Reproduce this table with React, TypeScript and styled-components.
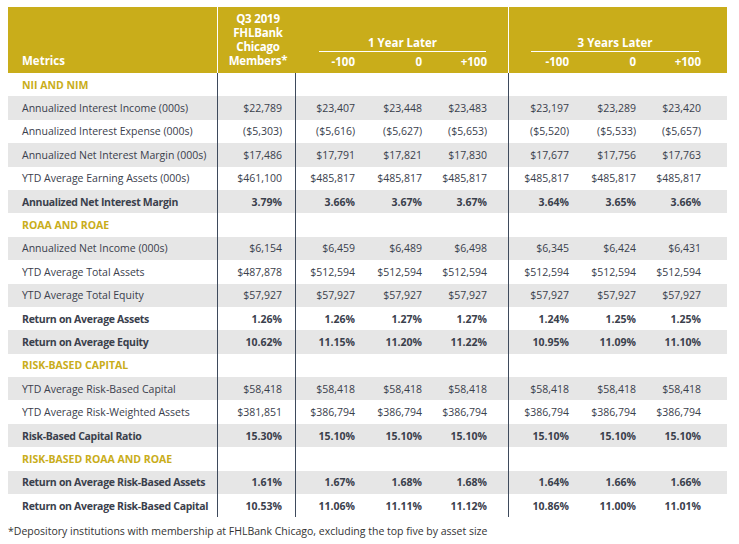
import React from "react";
import styled, { createGlobalStyle, css } from "styled-components";

const GOLD = "#c9ad1a";
const TEXT = "#3a404c";
const LINE = "#3e4a5c";
const STRIPE = "#e6e6e6";
const COLS = "210px 78px 59px 67px 65px 22px 60px 67px 65px 26px";

const Global = createGlobalStyle`
  html, body { margin: 0; padding: 0; background: #fff; }
  body { font-family: "Open Sans", "Noto Sans", sans-serif; }
`;

const Page = styled.div`
  padding: 7px 8px 0 8px;
  width: 719px;
`;

const Header = styled.div`
  display: grid;
  grid-template-columns: ${COLS};
  grid-template-rows: 45px 21px;
  background: ${GOLD};
  color: #fff;
  font-weight: 700;
  font-size: 11px;
`;

const HeadMetrics = styled.div`
  grid-column: 1;
  grid-row: 1 / 3;
  display: flex;
  align-items: flex-end;
  padding: 0 0 5px 14px;
  border-right: 1px solid #fff;
  font-size: 11.5px;
`;

const HeadQ3 = styled.div`
  grid-column: 2;
  grid-row: 1 / 3;
  display: flex;
  align-items: flex-end;
  justify-content: center;
  text-align: center;
  line-height: 14px;
  padding: 0 0 5px 2px;
  font-size: 11.5px;
  letter-spacing: -0.2px;
`;

const GroupCell = styled.div<{ $col: string; $divider?: boolean }>`
  grid-column: ${(p) => p.$col};
  grid-row: 1;
  display: flex;
  align-items: flex-end;
  ${(p) =>
    p.$divider &&
    css`
      border-right: 1px solid #fff;
    `}
`;

const GroupLabel = styled.div<{ $ml: number; $mr: number }>`
  flex: 1;
  margin: 0 ${(p) => p.$mr}px 0 ${(p) => p.$ml}px;
  border-bottom: 1px solid #fff;
  text-align: center;
  font-size: 11.5px;
  line-height: 14px;
  padding-bottom: 1px;
`;

const SpacerHead = styled.div<{ $col: number; $divider?: boolean }>`
  grid-column: ${(p) => p.$col};
  grid-row: 2;
  ${(p) =>
    p.$divider &&
    css`
      border-right: 1px solid #fff;
    `}
`;

const SubLabel = styled.div<{ $col: number }>`
  grid-column: ${(p) => p.$col};
  grid-row: 2;
  text-align: right;
  font-size: 11.5px;
  line-height: 19px;
`;

const Row = styled.div<{ $shade: boolean }>`
  display: grid;
  grid-template-columns: ${COLS};
  height: 23.4px;
  background: ${(p) => (p.$shade ? STRIPE : "#fff")};
  color: ${TEXT};
  font-size: 10.5px;
`;

const Label = styled.div<{ $bold?: boolean; $section?: boolean }>`
  display: flex;
  align-items: center;
  padding-left: 14px;
  border-right: 1px solid ${LINE};
  white-space: nowrap;
  overflow: hidden;
  font-weight: ${(p) => (p.$bold || p.$section ? 700 : 400)};
  letter-spacing: ${(p) => (p.$bold ? "-0.3px" : "0")};
  color: ${(p) => (p.$section ? GOLD : TEXT)};
`;

const Value = styled.div<{ $bold?: boolean; $pad?: number; $divider?: boolean }>`
  display: flex;
  align-items: center;
  justify-content: flex-end;
  padding-right: ${(p) => p.$pad ?? 0}px;
  white-space: nowrap;
  font-weight: ${(p) => (p.$bold ? 700 : 400)};
  ${(p) =>
    p.$divider &&
    css`
      border-right: 1px solid ${LINE};
    `}
`;

const Gap = styled.div<{ $divider?: boolean }>`
  ${(p) =>
    p.$divider &&
    css`
      border-right: 1px solid ${LINE};
    `}
`;

const Footnote = styled.div`
  margin-top: 7px;
  font-size: 10.5px;
  line-height: 14px;
  color: #333;
`;

type DataRow =
  | { section: string }
  | { label: string; bold?: boolean; values: string[] };

const rep = (v: string, n: number) => Array(n).fill(v);

const rows: DataRow[] = [
  { section: "NII AND NIM" },
  {
    label: "Annualized Interest Income (000s)",
    values: ["$22,789", "$23,407", "$23,448", "$23,483", "$23,197", "$23,289", "$23,420"],
  },
  {
    label: "Annualized Interest Expense (000s)",
    values: ["($5,303)", "($5,616)", "($5,627)", "($5,653)", "($5,520)", "($5,533)", "($5,657)"],
  },
  {
    label: "Annualized Net Interest Margin (000s)",
    values: ["$17,486", "$17,791", "$17,821", "$17,830", "$17,677", "$17,756", "$17,763"],
  },
  {
    label: "YTD Average Earning Assets (000s)",
    values: ["$461,100", ...rep("$485,817", 6)],
  },
  {
    label: "Annualized Net Interest Margin",
    bold: true,
    values: ["3.79%", "3.66%", "3.67%", "3.67%", "3.64%", "3.65%", "3.66%"],
  },
  { section: "ROAA AND ROAE" },
  {
    label: "Annualized Net Income (000s)",
    values: ["$6,154", "$6,459", "$6,489", "$6,498", "$6,345", "$6,424", "$6,431"],
  },
  { label: "YTD Average Total Assets", values: ["$487,878", ...rep("$512,594", 6)] },
  { label: "YTD Average Total Equity", values: rep("$57,927", 7) },
  {
    label: "Return on Average Assets",
    bold: true,
    values: ["1.26%", "1.26%", "1.27%", "1.27%", "1.24%", "1.25%", "1.25%"],
  },
  {
    label: "Return on Average Equity",
    bold: true,
    values: ["10.62%", "11.15%", "11.20%", "11.22%", "10.95%", "11.09%", "11.10%"],
  },
  { section: "RISK-BASED CAPITAL" },
  { label: "YTD Average Risk-Based Capital", values: rep("$58,418", 7) },
  { label: "YTD Average Risk-Weighted Assets", values: ["$381,851", ...rep("$386,794", 6)] },
  { label: "Risk-Based Capital Ratio", bold: true, values: ["15.30%", ...rep("15.10%", 6)] },
  { section: "RISK-BASED ROAA AND ROAE" },
  {
    label: "Return on Average Risk-Based Assets",
    bold: true,
    values: ["1.61%", "1.67%", "1.68%", "1.68%", "1.64%", "1.66%", "1.66%"],
  },
  {
    label: "Return on Average Risk-Based Capital",
    bold: true,
    values: ["10.53%", "11.06%", "11.11%", "11.12%", "10.86%", "11.00%", "11.01%"],
  },
];

function BodyRow({ row, shade }: { row: DataRow; shade: boolean }) {
  if ("section" in row) {
    return (
      <Row $shade={shade}>
        <Label $section>{row.section}</Label>
        <Value $divider />
        <Gap />
        <Gap />
        <Gap />
        <Gap $divider />
        <Gap />
        <Gap />
        <Gap />
        <Gap />
      </Row>
    );
  }
  const v = row.values;
  const b = row.bold;
  return (
    <Row $shade={shade}>
      <Label $bold={b}>{row.label}</Label>
      <Value $bold={b} $pad={13} $divider>
        {v[0]}
      </Value>
      <Value $bold={b}>{v[1]}</Value>
      <Value $bold={b}>{v[2]}</Value>
      <Value $bold={b}>{v[3]}</Value>
      <Gap $divider />
      <Value $bold={b}>{v[4]}</Value>
      <Value $bold={b}>{v[5]}</Value>
      <Value $bold={b}>{v[6]}</Value>
      <Gap />
    </Row>
  );
}

export default function App() {
  return (
    <Page>
      <Global />
      <Header>
        <HeadMetrics>Metrics</HeadMetrics>
        <HeadQ3>
          Q3 2019
          <br />
          FHLBank
          <br />
          Chicago
          <br />
          Members*
        </HeadQ3>
        <GroupCell $col="3 / 7" $divider>
          <GroupLabel $ml={23} $mr={22}>1 Year Later</GroupLabel>
        </GroupCell>
        <GroupCell $col="7 / 11">
          <GroupLabel $ml={22} $mr={28}>3 Years Later</GroupLabel>
        </GroupCell>
        <SubLabel $col={3}>-100</SubLabel>
        <SubLabel $col={4}>0</SubLabel>
        <SubLabel $col={5}>+100</SubLabel>
        <SpacerHead $col={6} $divider />
        <SubLabel $col={7}>-100</SubLabel>
        <SubLabel $col={8}>0</SubLabel>
        <SubLabel $col={9}>+100</SubLabel>
      </Header>
      {rows.map((r, i) => (
        <BodyRow key={i} row={r} shade={i % 2 === 1} />
      ))}
      <Footnote>
        *Depository institutions with membership at FHLBank Chicago, excluding the top five by asset size
      </Footnote>
    </Page>
  );
}
